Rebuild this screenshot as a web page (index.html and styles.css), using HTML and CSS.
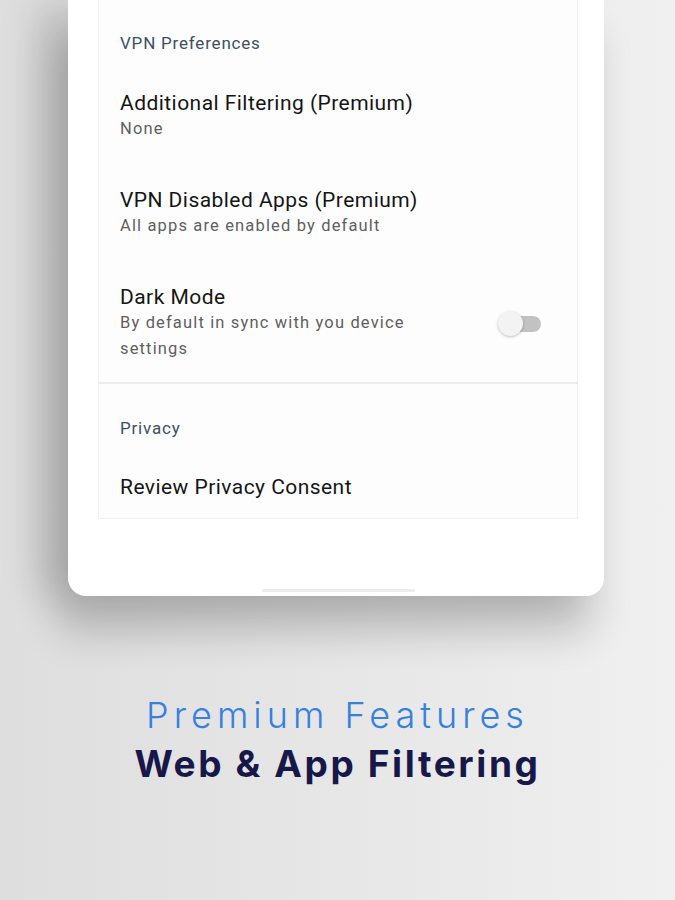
FILE: index.html
```html
<!DOCTYPE html>
<html lang="en">
<head>
<meta charset="utf-8">
<title>Premium Features</title>
<link rel="stylesheet" href="styles.css">
</head>
<body>
<main class="stage">
  <section class="phone">
    <div class="screen">
      <div class="card card-top">
        <h2 class="section-title">VPN Preferences</h2>
        <div class="item">
          <div class="item-text">
            <div class="item-title">Additional Filtering (Premium)</div>
            <div class="item-sub">None</div>
          </div>
        </div>
        <div class="item">
          <div class="item-text">
            <div class="item-title">VPN Disabled Apps (Premium)</div>
            <div class="item-sub">All apps are enabled by default</div>
          </div>
        </div>
        <div class="item item-toggle">
          <div class="item-text">
            <div class="item-title">Dark Mode</div>
            <div class="item-sub">By default in sync with you device settings</div>
          </div>
          <div class="switch"><span class="thumb"></span></div>
        </div>
      </div>
      <div class="card card-bottom">
        <h2 class="section-title">Privacy</h2>
        <div class="item item-single">
          <div class="item-title">Review Privacy Consent</div>
        </div>
      </div>
    </div>
    <div class="home-bar"></div>
  </section>
  <section class="caption">
    <p class="caption-light">Premium Features</p>
    <p class="caption-bold">Web &amp; App Filtering</p>
  </section>
</main>
</body>
</html>
```
FILE: styles.css
```css
* { box-sizing: border-box; }
html, body { margin: 0; padding: 0; }
body {
  width: 675px;
  height: 900px;
  overflow: hidden;
  background: linear-gradient(to right, #dedede 0%, #e5e5e5 40%, #ebebeb 75%, #f0f0f0 100%);
  font-family: Roboto, "Noto Sans", Arial, sans-serif;
}
.stage {
  display: flex;
  flex-direction: column;
  align-items: flex-start;
  padding-left: 68px;
}
.phone {
  width: 536px;
  height: 596px;
  background: #ffffff;
  border-radius: 0 0 18px 18px;
  box-shadow: -12px 36px 42px rgba(0, 0, 0, 0.20), -34px 0 36px rgba(0, 0, 0, 0.12);
  padding: 0 26px 0 30px;
  display: flex;
  flex-direction: column;
  align-items: stretch;
}
.screen { flex: 1; }
.card {
  background: #fdfdfd;
  border: 1px solid #f0f0f0;
  padding-left: 21px;
}
.card-top {
  border-top: none;
  border-bottom: 2px solid #ececec;
  padding-top: 33px;
  height: 384px;
}
.card-bottom {
  border-top: none;
  padding-top: 34px;
  height: 135px;
}
.section-title {
  margin: 0 0 15px;
  font-size: 17px;
  line-height: 20px;
  font-weight: 400;
  letter-spacing: 0.8px;
  color: #3e5163;
}
.item {
  padding: 23px 0;
  display: flex;
  align-items: center;
}
.item-text { width: 340px; }
.item-title {
  font-size: 21px;
  line-height: 25px;
  letter-spacing: 0.45px;
  color: #151515;
}
.item-sub {
  font-size: 16.5px;
  line-height: 26px;
  letter-spacing: 1.15px;
  color: #5f5f5f;
}
.item-single { padding: 22px 0 0; }
.item-toggle { justify-content: space-between; padding-right: 36px; }
.switch {
  width: 38px;
  height: 16px;
  border-radius: 8px;
  background: #c2c2c2;
  display: flex;
  align-items: center;
}
.thumb {
  width: 25px;
  height: 25px;
  border-radius: 50%;
  background: #f3f3f3;
  margin-left: -5px;
  box-shadow: 0 1px 3px rgba(0, 0, 0, 0.25);
}
.home-bar {
  align-self: center;
  width: 153px;
  height: 3px;
  background: #ececec;
  border-radius: 2px;
  margin: 0 0 4px 0;
}
.caption {
  margin-left: -68px;
  margin-top: 97px;
  width: 675px;
  text-align: center;
}
.caption p { margin: 0; }
.caption-light {
  font-family: Inter, "Noto Sans", sans-serif;
  font-weight: 300;
  font-size: 36px;
  line-height: 44px;
  letter-spacing: 5px;
  color: #3580e0;
}
.caption-bold {
  font-family: Inter, "Noto Sans", sans-serif;
  font-weight: 700;
  font-size: 37px;
  line-height: 54px;
  letter-spacing: 2.6px;
  color: #17174a;
}
```
